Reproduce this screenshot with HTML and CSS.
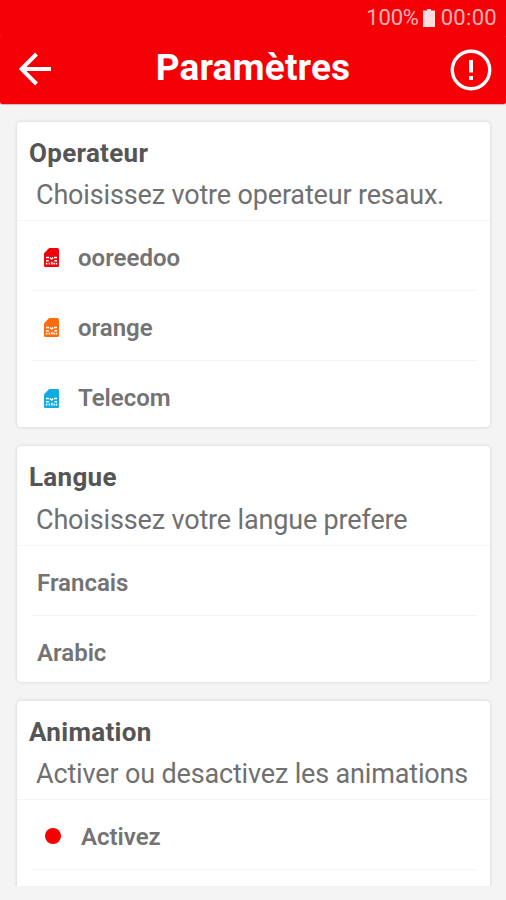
FILE: index.html
```html
<!DOCTYPE html>
<html lang="fr">
<head>
<meta charset="utf-8">
<title>Paramètres</title>
<link rel="stylesheet" href="styles.css">
</head>
<body>
<svg class="defs" width="0" height="0" aria-hidden="true">
  <symbol id="sim" viewBox="0 0 15 19">
    <path fill="currentColor" d="M5.2 0H13.5Q15 0 15 1.5V17.5Q15 19 13.5 19H1.5Q0 19 0 17.5V5.2Z"/>
    <path fill="none" stroke="#fff" stroke-width="1.5" d="M2 9.6H5M6 9.6L7.6 11L9.2 9.6M10 9.6H13M2 12.7H4.8M10.4 12.7H13M2.6 14.8V16.6M5.4 14.5V16.6M7.9 13.8V16.6M10.2 14.8V16.6M12.5 14.8V16.6"/>
  </symbol>
</svg>
<div class="status">
  <span class="battery-level">100%</span>
  <svg class="battery" viewBox="0 0 12 18"><path d="M4 0H8V1.5H12V18H0V1.5H4Z"/></svg>
  <span class="clock">00:00</span>
</div>
<header class="appbar">
  <svg class="back" viewBox="0 0 34 34"><path d="M32 17H3M17.5 2L2.5 17L17.5 32"/></svg>
  <h1>Paramètres</h1>
  <svg class="info" viewBox="0 0 42 42"><circle cx="21" cy="21" r="18.7"/><path d="M21 11V23.5M21 27V31"/></svg>
</header>
<main>
  <section class="card operator">
    <h2>Operateur</h2>
    <p>Choisissez votre operateur resaux.</p>
    <ul>
      <li><svg class="sim red"><use href="#sim"/></svg><span>ooreedoo</span></li>
      <li><svg class="sim orange"><use href="#sim"/></svg><span>orange</span></li>
      <li><svg class="sim blue"><use href="#sim"/></svg><span>Telecom</span></li>
    </ul>
  </section>
  <section class="card language">
    <h2>Langue</h2>
    <p>Choisissez votre langue prefere</p>
    <ul>
      <li><span>Francais</span></li>
      <li><span>Arabic</span></li>
    </ul>
  </section>
  <section class="card animation">
    <h2>Animation</h2>
    <p>Activer ou desactivez les animations</p>
    <ul>
      <li><i class="dot"></i><span>Activez</span></li>
      <li></li>
    </ul>
  </section>
</main>
</body>
</html>
```
FILE: styles.css
```css
* { box-sizing: border-box; }
body {
  margin: 0;
  height: 900px;
  overflow: hidden;
  background: #f4f4f4;
  font-family: Roboto, "Liberation Sans", sans-serif;
}
.defs { display: block; }
.status {
  display: flex;
  align-items: center;
  justify-content: flex-end;
  height: 36px;
  margin-bottom: -1px;
  padding: 0 9px 1px 0;
  background: #f40006;
  color: #ffb3b5;
  font-size: 22px;
  line-height: 35px;
}
.battery-level { letter-spacing: -.2px; }
.battery { width: 12px; height: 18px; margin: 0 6px 0 4px; fill: #ffdcdd; }
.clock { letter-spacing: .3px; }
.appbar {
  display: grid;
  grid-template-columns: 60px 1fr 60px;
  align-items: center;
  height: 69px;
  background: #f40006;
  border-radius: 2px;
  color: #fff;
  box-shadow: 0 2px 1px -1px #c9bcbc;
}
.back { width: 34px; height: 34px; margin: -1px 0 0 19px; fill: none; stroke: #fff; stroke-width: 4; }
.info { width: 42px; height: 42px; margin-left: 4px; fill: none; stroke: #fff; stroke-width: 3.4; }
.info path { stroke-width: 4; }
h1 { margin: -3px 0 0; text-align: center; font-size: 37px; letter-spacing: .15px; line-height: 42px; font-weight: 700; }
main { display: flex; flex-direction: column; gap: 19px; height: 782px; padding: 18px 16px 0 17px; overflow: hidden; }
.card { flex: none; background: #fff; border-radius: 4px; box-shadow: 0 0 3px 1px #dedede; }
.operator { height: 305px; }
.language { height: 236px; }
.animation { height: 240px; }
h2 { margin: 0; padding: 14px 0 0 12px; font-size: 26px; letter-spacing: .3px; line-height: 34px; font-weight: 700; color: #555; }
p { margin: 0; height: 51px; padding: 8px 0 0 19px; border-bottom: 1px solid #f5f5f5; font-size: 27px; letter-spacing: -.16px; line-height: 34px; color: #707070; white-space: nowrap; }
ul { margin: 0; padding: 0 14px 0 15px; list-style: none; }
li { display: flex; align-items: center; height: 70px; padding: 4px 0 0 12px; border-bottom: 1px solid #f5f5f5; font-size: 24px; font-weight: 600; color: #737373; }
li:last-child { border-bottom: 0; }
.language p { height: 52px; padding-top: 9px; }
.language li { padding-left: 5px; }
.sim { width: 15px; height: 19px; margin-right: 19px; }
.red { color: #f00008; }
.orange { color: #ff6c0e; }
.blue { color: #10ade5; }
.dot { width: 16px; height: 16px; margin: -2px 20px 0 1px; border-radius: 50%; background: #f80000; }
```
